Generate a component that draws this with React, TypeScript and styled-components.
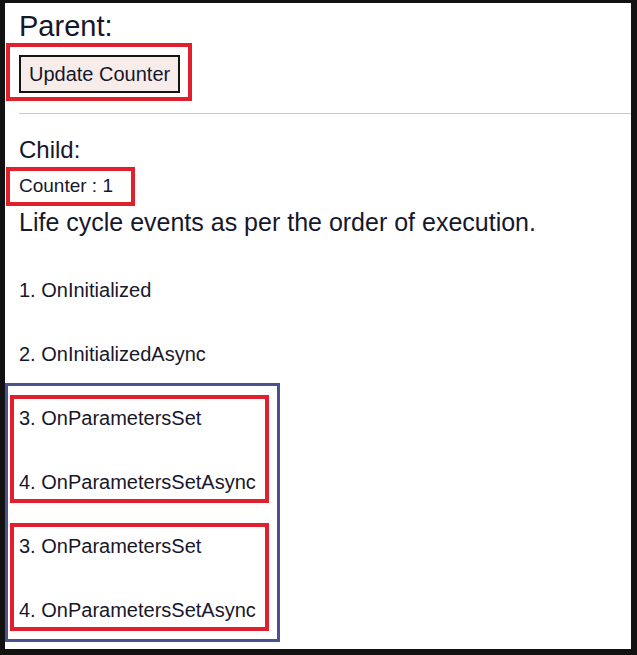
import React from "react";
import styled, { createGlobalStyle } from "styled-components";

const Global = createGlobalStyle`
  html, body { margin: 0; padding: 0; background: #121212; }
  body { font-family: "Liberation Sans", Arial, sans-serif; }
`;

const Frame = styled.div`
  width: 637px;
  height: 655px;
  box-sizing: border-box;
  padding: 3px 6px 6px 5px;
  background: #121212;
  display: flex;
`;

const Page = styled.main`
  flex: 1;
  background: #ffffff;
  display: flex;
  flex-direction: column;
  align-items: flex-start;
  color: #17172b;
  overflow: hidden;
`;

const Title = styled.h3<{ $size: number; $lh: number; $mt: number }>`
  margin: ${(p) => p.$mt}px 0 0 14px;
  font-size: ${(p) => p.$size}px;
  line-height: ${(p) => p.$lh}px;
  font-weight: 400;
`;

const Callout = styled.div<{ $mt: number }>`
  margin: ${(p) => p.$mt}px 0 0 1px;
  border: 4px solid #e2202d;
`;

const ButtonCallout = styled(Callout)`
  padding: 8px 8px 4px 9px;
  display: flex;
`;

const UpdateButton = styled.button`
  height: 38px;
  box-sizing: border-box;
  border: 2px solid #141414;
  background: #f6edea;
  color: #17172b;
  font-family: "Liberation Sans", Arial, sans-serif;
  font-size: 20px;
  line-height: 34px;
  padding: 0 8px;
  cursor: pointer;
`;

const Divider = styled.hr`
  align-self: stretch;
  margin: 12px 0 0 14px;
  border: 0;
  border-top: 1px solid #c9c9c9;
  height: 0;
`;

const CounterCallout = styled(Callout)`
  padding: 0 18px 2px 9px;
  font-size: 19px;
  line-height: 29px;
`;

const Intro = styled.p`
  margin: 1px 0 0 14px;
  font-size: 25px;
  line-height: 30px;
`;

const EventList = styled.div<{ $mt: number; $ml: number }>`
  display: flex;
  flex-direction: column;
  gap: 40px;
  margin: ${(p) => p.$mt}px 0 0 ${(p) => p.$ml}px;
`;

const EventItem = styled.div`
  font-size: 20px;
  line-height: 24px;
`;

const Group = styled.section`
  margin-top: 17px;
  width: 275px;
  box-sizing: border-box;
  border: 3px solid #4b5191;
  padding: 9px 0 8px 2px;
  display: flex;
  flex-direction: column;
  gap: 20px;
`;

const Pair = styled.div`
  width: 259px;
  box-sizing: border-box;
  border: 4px solid #e2202d;
  padding: 7px 0 5px 5px;
`;

const initial = ["1. OnInitialized", "2. OnInitializedAsync"];
const params = ["3. OnParametersSet", "4. OnParametersSetAsync"];

export default function App() {
  return (
    <>
      <Global />
      <Frame>
        <Page>
          <Title $size={29} $lh={34} $mt={6}>Parent:</Title>
          <ButtonCallout $mt={0}>
            <UpdateButton>Update Counter</UpdateButton>
          </ButtonCallout>
          <Divider />
          <Title $size={24} $lh={28} $mt={22}>Child:</Title>
          <CounterCallout $mt={3}>Counter : 1</CounterCallout>
          <Intro>Life cycle events as per the order of execution.</Intro>
          <EventList $mt={41} $ml={14}>
            {initial.map((t) => (
              <EventItem key={t}>{t}</EventItem>
            ))}
          </EventList>
          <Group>
            {[0, 1].map((i) => (
              <Pair key={i}>
                <EventList $mt={0} $ml={0}>
                  {params.map((t) => (
                    <EventItem key={t}>{t}</EventItem>
                  ))}
                </EventList>
              </Pair>
            ))}
          </Group>
        </Page>
      </Frame>
    </>
  );
}
